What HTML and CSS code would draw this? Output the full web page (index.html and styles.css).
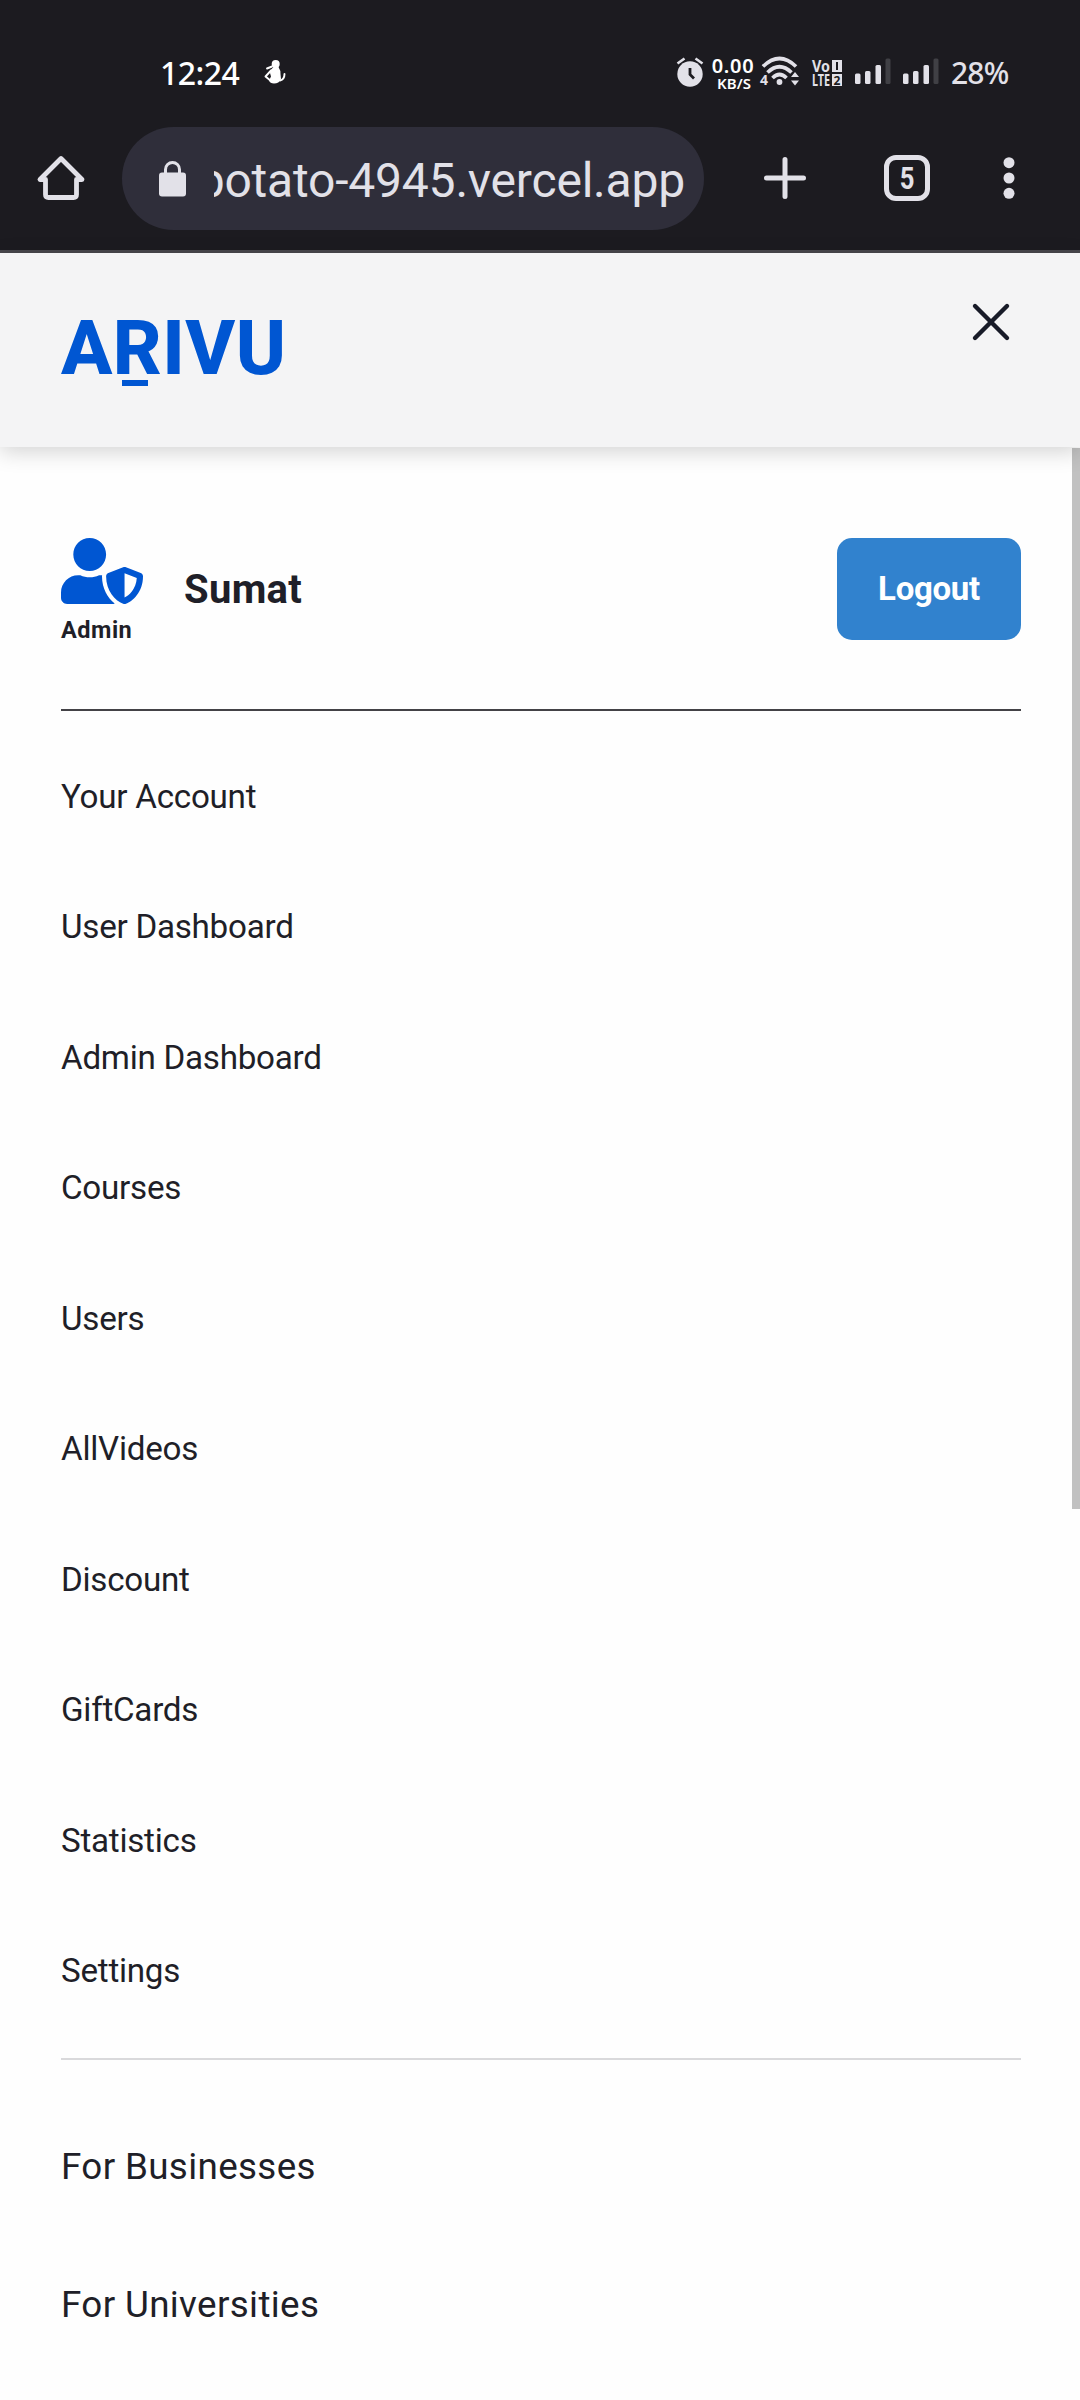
FILE: index.html
```html
<!DOCTYPE html>
<html lang="en">
<head>
<meta charset="utf-8">
<title>Arivu</title>
<link rel="stylesheet" href="styles.css">
</head>
<body>
<div class="status-bar">
  <span class="clock">12:24</span>
  <svg class="notif" width="22" height="25" viewBox="0 0 22 25"><circle cx="11.700" cy="4" r="4" fill="#fff"/><path d="M9.500 7h5q2.500 4 2 7l.5 5q-2 4.500-7 4.500-4 0-5-3l2-4-1-3.500q.5-4 3.500-6z" fill="#fff"/><path d="M16 20.500q4.500-1 4.500-6.500M3 8.500l5-2M7 10.500L1.500 16.500 7 21" stroke="#fff" stroke-width="1.900" fill="none" stroke-linecap="round" stroke-linejoin="round"/></svg>
  <div class="status-right">
    <svg class="alarm" width="28" height="30" viewBox="0 0 28 30"><circle cx="14" cy="17" r="12.700" fill="#e2e1e8"/><path d="M1.500 6.500L8.500 1.500M26.500 6.500L19.500 1.500" stroke="#e2e1e8" stroke-width="2.600"/><path d="M14 11v6.500l4 4" fill="none" stroke="#1c1b20" stroke-width="2.800"/></svg>
    <div class="speed"><span class="speed-num">0.00</span><span class="speed-unit">KB/S</span></div>
    <svg class="wifi" width="40" height="30" viewBox="0 0 40 30"><g fill="none" stroke="#e2e1e8" stroke-width="3.700"><path d="M3 10.500Q19.500-5.500 36 10.500"/><path d="M7.500 16.500Q19.500 5 31.500 16.500"/><path d="M12.500 22Q19.500 15 26.500 22"/></g><circle cx="19.500" cy="26" r="2.900" fill="#e2e1e8"/><path d="M31 21l4-5 4 5zM31 24.500l4 5 4-5z" fill="#e2e1e8"/><text class="tiny" x="0" y="28.500" font-size="14">4</text></svg>
    <svg class="volte" width="32" height="28" viewBox="0 0 32 28"><text class="tiny" x="1" y="12.500" font-size="16" textLength="18" lengthAdjust="spacingAndGlyphs">Vo</text><text class="tiny" x="1" y="26.500" font-size="16" textLength="18" lengthAdjust="spacingAndGlyphs">LTE</text><rect x="21" y="1" width="10" height="12" fill="#e2e1e8"/><rect x="21" y="15" width="10" height="12" fill="#e2e1e8"/><path d="M26 3v8" stroke="#1c1b20" stroke-width="2"/><text class="tiny dark" x="22.500" y="25.500" font-size="12">2</text></svg>
    <svg class="signal" width="36" height="28" viewBox="0 0 36 28"><g fill="#e2e1e8"><rect x="0" y="16.500" width="5.500" height="10.500" rx="1.500"/><rect x="10" y="14" width="5.500" height="13" rx="1.500"/><rect x="20.500" y="8" width="5.500" height="19" rx="1.500"/></g><rect x="30.500" y="1.500" width="5" height="25.500" rx="1.500" fill="#404045"/></svg>
    <svg class="signal signal-2" width="36" height="28" viewBox="0 0 36 28"><g fill="#e2e1e8"><rect x="0" y="16.500" width="5.500" height="10.500" rx="1.500"/><rect x="10" y="14" width="5.500" height="13" rx="1.500"/><rect x="20.500" y="8" width="5.500" height="19" rx="1.500"/></g><rect x="30.500" y="1.500" width="5" height="25.500" rx="1.500" fill="#404045"/></svg>
    <span class="battery">28%</span>
  </div>
</div>
<div class="toolbar">
  <svg class="home" width="48" height="48" viewBox="0 0 48 48"><path d="M3 25.500h5.500v15q0 3 3 3h25q3 0 3-3v-15H45L24 4.500z" fill="none" stroke="#e2e1e8" stroke-width="4.800" stroke-linejoin="round"/></svg>
  <div class="url-bar">
    <svg class="lock" width="28" height="36" viewBox="0 0 28 36"><rect x="0" y="11.500" width="27" height="24" rx="3" fill="#e2e1e8"/><path d="M6.500 13V8.500a7 7 0 0 1 14 0V13" fill="none" stroke="#e2e1e8" stroke-width="3"/></svg>
    <div class="url"><span>potato-4945.vercel.app</span></div>
  </div>
  <svg class="plus" width="42" height="42" viewBox="0 0 42 42"><path d="M21 2.500v37M2.500 21h37" stroke="#e2e1e8" stroke-width="5" stroke-linecap="round"/></svg>
  <div class="tabs"><span class="tab-count">5</span></div>
  <svg class="dots" width="12" height="42" viewBox="0 0 12 42"><g fill="#e2e1e8"><circle cx="6" cy="5.700" r="5.500"/><circle cx="6" cy="21" r="5.500"/><circle cx="6" cy="36.300" r="5.500"/></g></svg>
</div>
<header class="header">
  <div class="logo">A<span class="logo-r">R</span>IVU</div>
  <svg class="close" width="38" height="38" viewBox="0 0 38 38"><path d="M3 3l32 32M35 3L3 35" stroke="#181b28" stroke-width="4.400" stroke-linecap="round"/></svg>
</header>
<main class="menu">
  <div class="scrollbar"></div>
  <section class="profile">
    <div class="role">
      <svg class="admin-icon" width="82" height="66" viewBox="0 0 640 512" preserveAspectRatio="none"><path fill="#0056d2" d="M622.300 271.100l-115.200-45c-4.100-1.600-12.600-3.700-22.200 0l-115.200 45c-10.700 4.200-17.700 14-17.700 24.900 0 111.600 68.700 188.800 132.900 213.900 9.600 3.700 18 1.600 22.200 0C558.400 489.900 640 420.500 640 296c0-10.900-7-20.700-17.700-24.900zM496 462.400V273.300l95.500 37.300c-5.600 87.100-60.900 135.400-95.500 151.800zM224 256c70.700 0 128-57.300 128-128S294.700 0 224 0 96 57.300 96 128s57.300 128 128 128zm96 40c0-2.500.800-4.800 1.100-7.200-2.500-.1-4.900-.8-7.500-.8h-16.700c-22.200 10.200-46.900 16-72.900 16s-50.600-5.800-72.900-16h-16.700C60.200 288 0 348.200 0 422.400V464c0 26.500 21.500 48 48 48h352c6.800 0 13.300-1.500 19.200-4-54-42.900-99.200-116.700-99.200-212z"/></svg>
      <span class="role-name">Admin</span>
    </div>
    <span class="user-name">Sumat</span>
    <button class="logout">Logout</button>
  </section>
  <nav class="links">
    <a>Your Account</a><a>User Dashboard</a><a>Admin Dashboard</a><a>Courses</a><a>Users</a><a>AllVideos</a><a>Discount</a><a>GiftCards</a><a>Statistics</a><a>Settings</a>
  </nav>
  <nav class="links links-more">
    <a>For Businesses</a><a>For Universities</a>
  </nav>
</main>
</body>
</html>
```
FILE: styles.css
```css
* { box-sizing: border-box; }
body { margin: 0; width: 1080px; height: 2400px; overflow: hidden; background: #fefefe; color: #1f1f28; font-family: Roboto, "Liberation Sans", sans-serif; }
svg { display: block; flex: none; overflow: visible; }
.status-bar { height: 110px; background: #1c1b20; display: flex; align-items: flex-start; color: #fff; font-family: "Noto Sans", sans-serif; }
.clock { width: 100px; margin: 50px 0 0 160px; font-size: 32px; line-height: 46px; font-weight: 500; letter-spacing: -0.5px; }
.notif { margin: 60px 0 0 4px; }
.status-right { margin-left: 389px; display: flex; align-items: flex-start; color: #e2e1e8; }
.alarm { margin: 57px 0 0 1px; }
.speed { width: 44px; margin: 55px 0 0 7px; display: flex; flex-direction: column; align-items: center; color: #fff; font-weight: 600; }
.speed-num { font-size: 20px; line-height: 21px; letter-spacing: 0.7px; }
.speed-unit { padding-left: 2px; font-size: 15px; line-height: 14px; }
.wifi { margin: 56px 0 0 5px; }
.volte { margin: 59px 0 0 11px; }
.tiny { font-family: "Noto Sans", sans-serif; font-weight: 700; fill: #e2e1e8; }
.dark { fill: #1c1b20; }
.signal { margin: 57px 0 0 12px; }
.signal-2 { margin-left: 12px; }
.battery { margin: 51px 0 0 12px; font-size: 30px; line-height: 44px; font-weight: 500; letter-spacing: -0.8px; }
.toolbar { height: 143px; background: #1c1b20; border-bottom: 3px solid #48474c; display: flex; align-items: flex-start; }
.home { margin: 44px 0 0 37px; }
.url-bar { width: 582px; height: 103px; margin: 17px 0 0 37px; border-radius: 52px; background: #2f2e3a; display: flex; align-items: center; padding: 0 19px 0 37px; }
.lock { margin-right: 27px; }
.url { flex: 1; overflow: hidden; display: flex; justify-content: flex-end; color: #e2e1e8; font-size: 48px; line-height: 66px; letter-spacing: -0.2px; white-space: nowrap; padding-top: 4px; }
.plus { margin: 47px 0 0 60px; }
.tabs { width: 46px; height: 46px; margin: 45px 0 0 78px; border: 5px solid #e2e1e8; border-radius: 12px; color: #e2e1e8; font: 700 32px/36px Roboto, sans-serif; display: flex; justify-content: center; }
.tab-count { transform: scaleX(0.8); }
.dots { margin: 47px 0 0 73px; }
.header { position: relative; z-index: 1; height: 194px; background: #f4f4f5; box-shadow: 0 5px 20px rgba(0, 0, 0, 0.17); display: flex; justify-content: space-between; align-items: flex-start; padding: 50px 70px 0 61px; }
.logo { margin-top: 1px; font-size: 76px; line-height: 88px; font-weight: 800; letter-spacing: 0.4px; color: #0056d2; }
.logo-r { position: relative; }
.logo-r::after { content: ""; position: absolute; left: 9px; top: 77px; width: 26px; height: 6px; background: #0056d2; }
.menu { position: relative; padding: 91px 59px 0 61px; }
.scrollbar { position: absolute; right: 0; top: 1px; width: 8px; height: 1061px; background: #c1c1c1; }
.profile { display: flex; height: 173px; border-bottom: 2px solid #434246; }
.role { width: 123px; }
.role-name { display: block; margin-top: 12px; font-size: 23.500px; line-height: 28px; font-weight: 700; letter-spacing: 0.5px; }
.user-name { flex: 1; height: 102px; line-height: 103px; font-size: 40px; font-weight: 700; letter-spacing: 0.3px; }
.logout { width: 184px; height: 102px; border: 0; border-radius: 15px; background: #3182ce; color: #fff; font: 700 33px/40px Roboto, sans-serif; letter-spacing: -0.3px; }
.links { display: flex; flex-direction: column; padding-top: 20.500px; height: 1349px; border-bottom: 2px solid #d9d9db; }
.links a { flex: none; height: 130.500px; line-height: 130.500px; font-size: 33.200px; letter-spacing: -0.26px; }
.links-more { padding-top: 38px; height: 340px; border: 0; }
.links-more a { height: 138px; line-height: 138px; font-size: 36.800px; letter-spacing: 0.35px; }
```
